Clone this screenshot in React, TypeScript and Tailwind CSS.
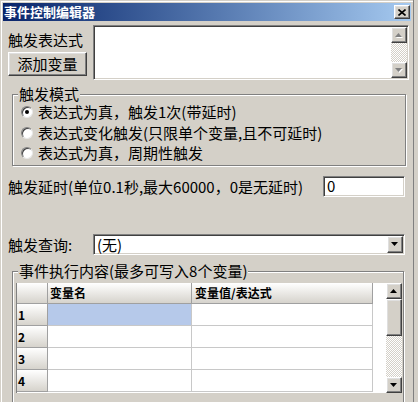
import React from 'react';

const FONT = "font-['Noto_Sans_CJK_SC','Liberation_Sans',sans-serif]";
const RAISED =
  'border border-t-white border-l-white border-r-[#404040] border-b-[#404040] shadow-[inset_-1px_-1px_0_#808080,inset_1px_1px_0_#dfdfdf]';
const SUNKEN =
  'border border-t-[#808080] border-l-[#808080] border-r-white border-b-white shadow-[inset_1px_1px_0_#404040,inset_-1px_-1px_0_#d4d0c8]';
const ETCHED = 'border border-[#808080] shadow-[inset_1px_1px_0_#ffffff,1px_1px_0_#ffffff]';
const DITHER =
  'bg-[repeating-conic-gradient(#d4d0c8_0%_25%,#ffffff_0%_50%)] bg-[length:2px_2px]';

function Arrow({ dir, disabled }: { dir: 'up' | 'down'; disabled?: boolean }) {
  const pts = dir === 'up' ? '3.5,0 7,4 0,4' : '0,0 7,0 3.5,4';
  return (
    <svg width="8" height="5" viewBox="0 0 8 5">
      {disabled && <polygon points={pts} fill="#ffffff" transform="translate(1,1)" />}
      <polygon points={pts} fill={disabled ? '#808080' : '#000000'} />
    </svg>
  );
}

function ScrollButton({ dir, disabled, h = 'h-[16px]' }: { dir: 'up' | 'down'; disabled?: boolean; h?: string }) {
  return (
    <div className={`w-[16px] ${h} shrink-0 bg-[#d4d0c8] flex items-center justify-center ${RAISED}`}>
      <Arrow dir={dir} disabled={disabled} />
    </div>
  );
}

function Radio({ checked }: { checked?: boolean }) {
  return (
    <div className="w-[12px] h-[12px] rounded-full bg-white border border-t-[#808080] border-l-[#808080] border-r-[#e8e8e8] border-b-[#e8e8e8] shadow-[inset_1px_1px_0_#404040] flex items-center justify-center shrink-0">
      {checked && <div className="w-[4px] h-[4px] rounded-full bg-black" />}
    </div>
  );
}

function GroupBox({ title, className, children }: { title: string; className: string; children?: React.ReactNode }) {
  return (
    <div className={`relative ${ETCHED} ${className}`}>
      <span className="absolute left-[5px] -top-[10px] px-[1px] bg-[#d4d0c8] text-[15px] leading-[18px] whitespace-nowrap">
        {title}
      </span>
      {children}
    </div>
  );
}

const radios = [
  { label: '表达式为真，触发1次(带延时)', checked: true },
  { label: '表达式变化触发(只限单个变量,且不可延时)' },
  { label: '表达式为真，周期性触发' },
];

const HEAD = 'bg-linear-to-b from-white to-[#d6d3cc] border-r border-b border-[#a0a0a0]';

export default function App() {
  return (
    <div className={`w-[418px] h-[402px] overflow-hidden bg-[#d4d0c8] flex text-black ${FONT}`}>
      <div className="w-[413px] h-full pt-[1px] pl-[1px]">
        <div className="h-full border-t border-l border-white pt-[1px] pl-[1px] flex flex-col">
          {/* Title bar */}
          <div className="w-[408px] h-[18px] shrink-0 flex items-center bg-linear-to-r from-[#0a246a] to-[#a6caf0] pl-[1px]">
            <span className="text-white font-bold text-[13px] leading-[18px]">事件控制编辑器</span>
            <div className={`ml-auto mr-[1px] w-[16px] h-[14px] bg-[#d4d0c8] flex items-center justify-center ${RAISED}`}>
              <svg width="8" height="7" viewBox="0 0 8 7">
                <path d="M0.5 0.5 L7.5 6.5 M7.5 0.5 L0.5 6.5" stroke="#000" strokeWidth="1.6" />
              </svg>
            </div>
          </div>

          <div className="pl-[5px] flex flex-col">
            {/* Expression */}
            <div className="mt-[4px] flex h-[55px]">
              <div className="w-[85px] flex flex-col">
                <span className="mt-[5px] h-[20px] text-[15px] leading-[20px] whitespace-nowrap">触发表达式</span>
                <div className={`mt-[2px] w-[79px] h-[24px] flex items-center justify-center text-[15px] ${RAISED}`}>
                  添加变量
                </div>
              </div>
              <div className={`w-[316px] h-[55px] bg-white flex ${SUNKEN}`}>
                <div className="flex-1" />
                <div className="w-[16px] mt-[1px] mb-[1px] mr-[1px] flex flex-col">
                  <ScrollButton dir="up" disabled />
                  <div className={`flex-1 ${DITHER}`} />
                  <ScrollButton dir="down" disabled />
                </div>
              </div>
            </div>

            {/* Trigger mode */}
            <GroupBox title="触发模式" className="mt-[14px] ml-[4px] w-[394px] h-[72px] shrink-0">
              <div className="pt-[7px] flex flex-col">
                {radios.map(r => (
                  <div key={r.label} className="h-[20.5px] flex items-center pl-[8px] gap-[5px]">
                    <Radio checked={r.checked} />
                    <span className="text-[15px] leading-[18px] whitespace-nowrap">{r.label}</span>
                  </div>
                ))}
              </div>
            </GroupBox>

            {/* Delay */}
            <div className="mt-[10px] h-[21px] w-[397px] flex items-center">
              <span className="text-[15px] leading-[18px] whitespace-nowrap">触发延时(单位0.1秒,最大60000，0是无延时)</span>
              <div className={`ml-auto w-[82px] h-[21px] bg-white flex items-center pl-[3px] text-[15px] ${SUNKEN}`}>0</div>
            </div>

            {/* Query */}
            <div className="mt-[37px] h-[21px] w-[397px] flex items-center">
              <span className="text-[15px] leading-[18px] whitespace-nowrap">触发查询:</span>
              <div className={`ml-auto w-[312px] h-[21px] bg-white flex items-center ${SUNKEN}`}>
                <span className="pl-[3px] text-[15px] leading-[18px]">(无)</span>
                <div className="ml-auto mr-[1px]">
                  <ScrollButton dir="down" h="h-[17px]" />
                </div>
              </div>
            </div>

            {/* Actions */}
            <GroupBox title="事件执行内容(最多可写入8个变量)" className="mt-[16px] ml-[4px] w-[392px] h-[140px] shrink-0">
              <div className="mt-[11px] ml-[3px] w-[386px] h-[110px] bg-white flex border-l border-[#808080]">
                <div className="flex-1 flex flex-col">
                  <div className="flex h-[21px] text-[12px] font-bold leading-[20px]">
                    <div className={`w-[31px] ${HEAD}`} />
                    <div className={`w-[144px] pl-[2px] ${HEAD}`}>变量名</div>
                    <div className={`w-[181px] pl-[3px] ${HEAD}`}>变量值/表达式</div>
                  </div>
                  {[1, 2, 3, 4].map(n => (
                    <div key={n} className="flex h-[22px]">
                      <div className={`w-[31px] pl-[1px] text-[12px] font-bold leading-[21px] ${HEAD}`}>{n}</div>
                      <div className={`w-[144px] border-r border-b border-[#c8c8c8] ${n === 1 ? 'bg-[#b6c9ea]' : ''}`} />
                      <div className="w-[181px] border-r border-b border-[#c8c8c8]" />
                    </div>
                  ))}
                </div>
                <div className="w-[16px] flex flex-col">
                  <ScrollButton dir="up" />
                  <div className={`h-[37px] bg-[#d4d0c8] ${RAISED}`} />
                  <div className={`flex-1 ${DITHER}`} />
                  <ScrollButton dir="down" />
                </div>
              </div>
            </GroupBox>
          </div>
        </div>
      </div>
      <div className="w-[5px] h-full border-l border-[#808080]" />
    </div>
  );
}
